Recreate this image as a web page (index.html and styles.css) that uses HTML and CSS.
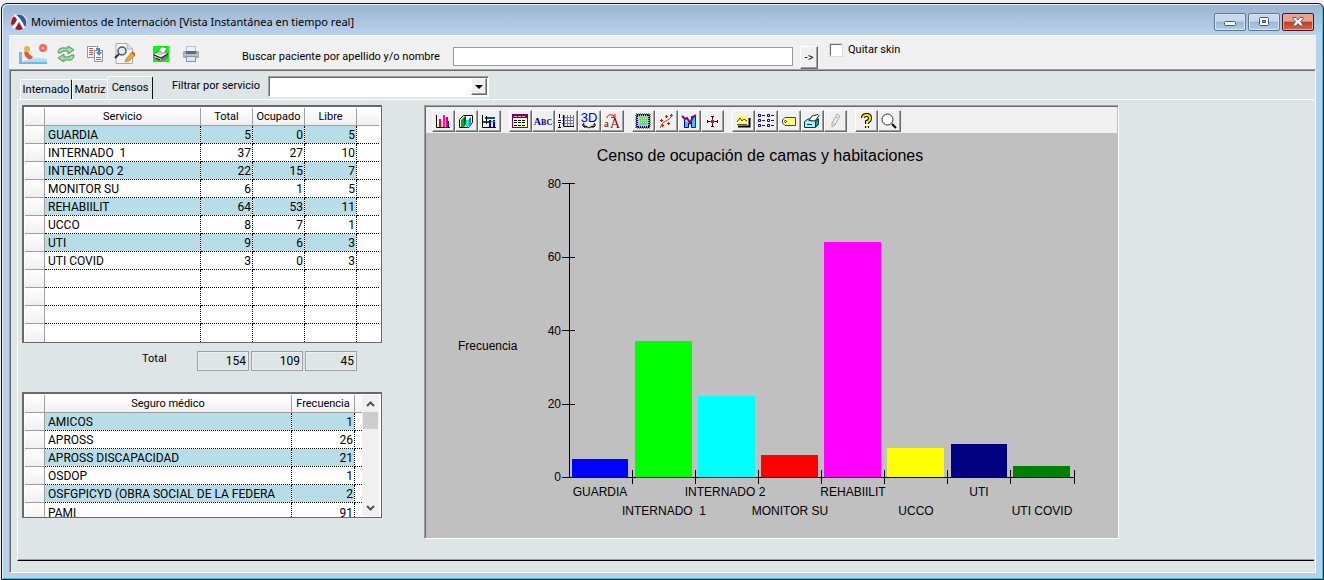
FILE: index.html
```html
<!DOCTYPE html>
<html lang="es">
<head>
<meta charset="utf-8">
<title>Movimientos de Internación</title>
<link rel="stylesheet" href="styles.css">
</head>
<body>
<div class="window">
  <header class="titlebar">
    <svg class="app-icon" width="16" height="16" viewBox="0 0 16 16">
      <circle cx="8" cy="8" r="8" fill="#f4f4f8"/>
      <path d="M5 1A8 8 0 0 1 14 13L11 9Q9 4 5 1Z" fill="#34599f"/>
      <path d="M3 2Q0 5 0 9L1 12Q5 9 6 6Q5 3 3 2Z" fill="#a11a22"/>
      <path d="M8 8L12 15Q8 17 4 15Z" fill="#a11a22"/>
      <path d="M3 1Q9 4 13 14M7 6Q5 11 2 14" fill="none" stroke="#fff" stroke-width="2"/>
    </svg>
    <h1 class="title">Movimientos de Internación [Vista Instantánea en tiempo real]</h1>
    <div class="win-buttons">
      <button class="win-btn" type="button" aria-label="Minimizar"><svg width="12" height="10" viewBox="0 0 12 10"><rect x=".5" y="4.500" width="11" height="4" rx="1" fill="#fff" stroke="#4f5666"/></svg></button>
      <button class="win-btn" type="button" aria-label="Restaurar"><svg width="12" height="10" viewBox="0 0 12 10"><rect x="1.500" y=".5" width="9" height="8" rx="1" fill="#fff" stroke="#4f5666"/><rect x="4.500" y="3.500" width="3" height="2" fill="#9db4cf" stroke="#4f5666"/></svg></button>
      <button class="win-btn close" type="button" aria-label="Cerrar"><svg width="12" height="10" viewBox="0 0 12 10"><path d="M1 .5H4L6 3L8 .5H11V1.500L8.500 4.500L11 8V9H8L6 6.500L4 9H1V8L3.500 4.500L1 1.500Z" fill="#fff" stroke="#56404a" stroke-width=".8"/></svg></button>
    </div>
  </header>
  <main class="client">
    <div class="toolbar">
      <div class="tool-icons">
        <button class="tool" type="button" aria-label="Internación"><svg width="28" height="21" viewBox="0 0 28 21">
          <path d="M0 9H3V20H0Z" fill="#7db9e2"/><path d="M3 19Q15 13 28 16V21H2Z" fill="#a9def5"/><path d="M0 19H28V21H0Z" fill="#70b9e6"/>
          <path d="M5 9Q9 7 10 11L14 14Q13 17 9 16L6 13Z" fill="#e8553f"/><circle cx="8" cy="6" r="3" fill="#edb44d"/>
          <circle cx="24" cy="5" r="4" fill="#ef6a5a"/><circle cx="24" cy="5" r="1.500" fill="#f7aaa0"/></svg></button>
        <button class="tool" type="button" aria-label="Actualizar"><svg width="18" height="16" viewBox="0 0 18 16">
          <path d="M1 7Q1 1 8 2H11V0L17 4L11 8V5H8Q4 5 4 7Z" fill="#a5dba2" stroke="#4c9560"/><path d="M17 9Q17 15 10 14H7V16L1 12L7 8V11H10Q14 11 14 9Z" fill="#a5dba2" stroke="#4c9560"/></svg></button>
        <button class="tool copy" type="button" aria-label="Copiar"><svg width="17" height="16" viewBox="0 0 17 16">
          <rect x=".5" y=".5" width="10" height="11" fill="#fff" stroke="#9298a8"/><path d="M2 2.500H6M2 4.500H6M2 6.500H6M2 8.500H6" stroke="#d05450"/>
          <rect x="7.500" y="4.500" width="8" height="11" fill="#fff" stroke="#8c93ab"/><path d="M9 11.500H14M9 13.500H14" stroke="#d05450"/><path d="M9 2H13V6H15L12 10L9 6H11V4H9Z" fill="#5682c6"/></svg></button>
        <button class="tool" type="button" aria-label="Ver y editar"><svg width="21" height="21" viewBox="0 0 21 21">
          <path d="M2 .5H13L18.500 6V20.500H2Z" fill="#f5f5f5" stroke="#aaa"/><path d="M13 .5V6H18.500" fill="#ddd" stroke="#b5b5b5"/>
          <circle cx="8" cy="8" r="4" fill="#dcebf8" stroke="#555" stroke-width="1.500"/><path d="M5 11L1 15" stroke="#333" stroke-width="2"/>
          <path d="M12 16L18 9L21 12L15 18L11 19Z" fill="#f5a931" stroke="#b67224" stroke-width=".7"/><path d="M18 9L21 12" stroke="#ce5a38" stroke-width="2"/></svg></button>
        <button class="tool census" type="button" aria-label="Imprimir censo"><svg width="16" height="16" viewBox="0 0 16 16">
          <rect width="16" height="16" fill="#0f0"/><path d="M1 8L6 5L8 1L14 2L12 6L15 8V11L8 15L1 12Z" fill="#c8c8c8" stroke="#555" stroke-width=".7"/><path d="M6 5L8 1L14 2L11 7Z" fill="#fff" stroke="#777" stroke-width=".5"/><path d="M8 12L15 8V11L8 15Z" fill="#777"/><path d="M1 9L8 12L15 8M3 12L7 14" fill="none" stroke="#111"/><path d="M2 8L8 10L12 8" fill="none" stroke="#fff"/></svg></button>
        <button class="tool print" type="button" aria-label="Imprimir"><svg width="16" height="16" viewBox="0 0 16 16">
          <rect x="3.500" y=".5" width="9" height="5" fill="#e8f2fa" stroke="#b1c3d3"/><rect y="5" width="16" height="7" rx="1" fill="#a5a8ad"/><path d="M3 5H13V8H3Z" fill="#626a74"/><path d="M1 9H15" stroke="#d4d6d9"/><rect x="3.500" y="10.500" width="9" height="5" fill="#d5e8f8" stroke="#7d98b2"/></svg></button>
      </div>
      <label class="search-label" for="search">Buscar paciente por apellido y/o nombre</label>
      <input class="search" id="search" type="text">
      <button class="go" type="button">-&gt;</button>
      <label class="skin"><input class="check" type="checkbox"><span>Quitar skin</span></label>
    </div>
    <div class="workspace">
      <div class="tab-strip">
        <div class="tabs" role="tablist">
          <button class="tab" role="tab" type="button">Internado</button>
          <button class="tab plain" role="tab" type="button">Matriz</button>
          <button class="tab active" role="tab" type="button" aria-selected="true">Censos</button>
        </div>
        <label class="filter-label" for="service">Filtrar por servicio</label>
        <div class="combo">
          <select class="combo-select" id="service"><option></option></select>
          <span class="combo-arrow"><svg width="8" height="4" viewBox="0 0 8 4"><path d="M0 0H8L4 4Z"/></svg></span>
        </div>
      </div>
      <section class="page">
        <div class="left">
          <div class="grid">
            <table class="data services">
              <colgroup><col class="c-head"><col class="c-service"><col class="c-num"><col class="c-num"><col class="c-num"><col></colgroup>
              <thead><tr><th></th><th>Servicio</th><th>Total</th><th>Ocupado</th><th>Libre</th><th></th></tr></thead>
              <tbody>
                <tr><th></th><td>GUARDIA</td><td>5</td><td>0</td><td>5</td><td></td></tr>
                <tr><th></th><td>INTERNADO  1</td><td>37</td><td>27</td><td>10</td><td></td></tr>
                <tr><th></th><td>INTERNADO 2</td><td>22</td><td>15</td><td>7</td><td></td></tr>
                <tr><th></th><td>MONITOR SU</td><td>6</td><td>1</td><td>5</td><td></td></tr>
                <tr><th></th><td>REHABIILIT</td><td>64</td><td>53</td><td>11</td><td></td></tr>
                <tr><th></th><td>UCCO</td><td>8</td><td>7</td><td>1</td><td></td></tr>
                <tr><th></th><td>UTI</td><td>9</td><td>6</td><td>3</td><td></td></tr>
                <tr><th></th><td>UTI COVID</td><td>3</td><td>0</td><td>3</td><td></td></tr>
                <tr class="empty"><th></th><td></td><td></td><td></td><td></td><td></td></tr>
                <tr class="empty"><th></th><td></td><td></td><td></td><td></td><td></td></tr>
                <tr class="empty"><th></th><td></td><td></td><td></td><td></td><td></td></tr>
                <tr class="empty"><th></th><td></td><td></td><td></td><td></td><td></td></tr>
              </tbody>
            </table>
          </div>
          <div class="totals">
            <label class="total-label" for="total">Total</label>
            <input class="total" id="total" type="text" value="154" readonly>
            <input class="total" type="text" value="109" readonly aria-label="Total ocupado">
            <input class="total" type="text" value="45" readonly aria-label="Total libre">
          </div>
          <div class="grid insurers-grid">
            <table class="data insurers">
              <colgroup><col class="c-head"><col class="c-insurer"><col class="c-freq"><col></colgroup>
              <thead><tr><th></th><th>Seguro médico</th><th>Frecuencia</th><th></th></tr></thead>
              <tbody>
                <tr><th></th><td>AMICOS</td><td>1</td><td></td></tr>
                <tr><th></th><td>APROSS</td><td>26</td><td></td></tr>
                <tr><th></th><td>APROSS DISCAPACIDAD</td><td>21</td><td></td></tr>
                <tr><th></th><td>OSDOP</td><td>1</td><td></td></tr>
                <tr><th></th><td>OSFGPICYD (OBRA SOCIAL DE LA FEDERA</td><td>2</td><td></td></tr>
                <tr><th></th><td>PAMI</td><td>91</td><td></td></tr>
              </tbody>
            </table>
            <div class="scrollbar">
              <button class="scroll-btn" type="button" aria-label="Subir"><svg width="9" height="6" viewBox="0 0 9 6"><path d="M1 5L4.500 1.500L8 5" fill="none" stroke="#555" stroke-width="2"/></svg></button>
              <div class="thumb"></div>
              <button class="scroll-btn" type="button" aria-label="Bajar"><svg width="9" height="6" viewBox="0 0 9 6"><path d="M1 1L4.500 4.500L8 1" fill="none" stroke="#555" stroke-width="2"/></svg></button>
            </div>
          </div>
        </div>
        <div class="chart">
          <div class="chart-tools">
            <div class="group">
              <button class="cbtn" type="button" aria-label="Barras"><svg viewBox="0 0 16 16"><path d="M1.500 2V14.500H15" fill="none" stroke="#000"/><path d="M4 6H6V14H4Z" fill="red"/><path d="M8 2H10V14H8Z" fill="#f0f"/><path d="M11 4H13V14H11Z" fill="red"/><path d="M13 8H14V14H13Z" fill="#00f"/></svg></button>
              <button class="cbtn" type="button" aria-label="Barras 3D"><svg viewBox="0 0 16 16"><path d="M1.500 6.500L5.500 2.500H14.500V9.500L10.500 14.500H1.500Z" fill="#fff" stroke="#000"/><path d="M3 7L6 4V14H3Z" fill="#00b000"/><path d="M6 4L8 3V11L6 14Z" fill="#006000"/><path d="M8 7H11V14H8Z" fill="#0ee"/><path d="M11 6L13 4V10L11 13Z" fill="#008080"/></svg></button>
              <button class="cbtn" type="button" aria-label="Combinado"><svg viewBox="0 0 16 16"><path d="M1.500 2V14.500H15" fill="none" stroke="#000"/><path d="M4 4H14V6H4ZM2 8H10V10H2Z" fill="#006040"/><path d="M5 3H6V11H5Z" fill="#000"/><path d="M8 7H10V14H8ZM12 7H14V14H12Z" fill="#00c"/><path d="M10 8.500H14" stroke="#0aa"/></svg></button>
            </div>
            <div class="group">
              <button class="cbtn" type="button" aria-label="Tabla"><svg viewBox="0 0 16 16"><rect x=".5" y="1.500" width="15" height="13" fill="#ffffc0" stroke="#800060"/><path d="M0 1H16V5H0Z" fill="#800060"/><path d="M2 3.500H14" stroke="#d8a8cf" stroke-dasharray="3 1"/><path d="M2 7.500H14M2 9.500H14M2 12.500H14" stroke="#000" stroke-dasharray="3 1"/></svg></button>
              <button class="cbtn" type="button" aria-label="Texto"><svg viewBox="0 0 16 16"><text class="abc" x="8" y="12"><tspan class="abc-a">A</tspan>BC</text></svg></button>
              <button class="cbtn" type="button" aria-label="Cuadrícula"><svg viewBox="0 0 16 16"><path d="M6.500 2V14M9.500 2V14M12.500 2V14M15.500 2V14M4 4.500H16M4 7.500H16M4 10.500H16" stroke="#7378a0"/><path d="M5.500 2V13.500H16" fill="none" stroke="#000"/><path d="M1.500 1V5M0 7.500H3M0 9.500H3M1.500 11V15M0 14.500H3" stroke="#000"/></svg></button>
              <button class="cbtn" type="button" aria-label="3D"><svg viewBox="0 0 16 16"><text class="three" x="8" y="9">3D</text><path d="M3 10Q0 12 3 14L5 13L8 15L11 13L13 14Q16 12 13 10M3 14V11M3 14H6M13 14V11M13 14H10" fill="none" stroke="#000"/></svg></button>
              <button class="cbtn" type="button" aria-label="Fuentes"><svg viewBox="0 0 16 16"><text class="small-a" x="0" y="14">a</text><text class="big-a" x="6" y="15">A</text><path d="M3 5Q3 1 9 2L10 4M11 1V4.500H7" fill="none" stroke="red"/></svg></button>
            </div>
            <div class="group">
              <button class="cbtn" type="button" aria-label="Trama"><svg viewBox="0 0 16 16"><rect x="1" y="1" width="14" height="14" fill="#c0c8c0"/><rect x="2" y="2" width="12" height="12" fill="none" stroke="#000070" stroke-width="2" stroke-dasharray="1 1"/><rect x="1" y="1" width="14" height="14" fill="none" stroke="#002010" stroke-dasharray="1 1"/><path d="M4 4H12V12H4Z" fill="#70d878"/><path d="M4 5.500H12M4 7.500H12M4 9.500H12" stroke="#c0ffc0" stroke-dasharray="1 1"/></svg></button>
              <button class="cbtn" type="button" aria-label="Dispersión"><svg viewBox="0 0 16 16"><path d="M2 15Q4 9 8 8T14 2" fill="none" stroke="#666"/><path d="M2 7.500H5M3.500 6V9M3 12.500H6M4.500 11V14M7 3.500H10M8.500 2V5M9 10.500H12M10.500 9V12M12 2.500H15M13.500 1V4" stroke="red"/></svg></button>
              <button class="cbtn" type="button" aria-label="Colores"><svg viewBox="0 0 16 16"><path d="M3.500 7V14.500H7.500V10M7.500 10.500H10.500V14.500H14.500V3.500H10.500V10" fill="#30c8ff" stroke="#0000a0"/><path d="M1 3L4 6L6 5L9 10L12 4L15 2" fill="none" stroke="#800080" stroke-width="2"/></svg></button>
              <button class="cbtn" type="button" aria-label="Ejes"><svg viewBox="0 0 16 16"><path d="M8.500 3V14M7 3.500H10M7 13.500H10M3 8.500H14M3.500 7V10M13.500 7V10" stroke="#000"/><path d="M7 7H10V10H7ZM6 8H11V9H6ZM8 6H9V11H8Z" fill="red"/></svg></button>
            </div>
            <div class="group">
              <button class="cbtn" type="button" aria-label="Área"><svg viewBox="0 0 16 16"><path d="M3 13.500H14.500V5" fill="none" stroke="#000" stroke-width="2"/><path d="M2 3H12V11H2Z" fill="#ffff70"/><path d="M2 9L5 5L7 8L9 6L12 8" fill="none" stroke="#444"/><path d="M2 11.500H12" stroke="#660"/></svg></button>
              <button class="cbtn" type="button" aria-label="Leyenda"><svg viewBox="0 0 16 16"><path d="M.5 1.500H2.500V3.500H.5ZM.5 6.500H2.500V8.500H.5ZM.5 11.500H2.500V13.500H.5ZM9.500 1.500H11.500V3.500H9.500ZM9.500 6.500H11.500V8.500H9.500ZM9.500 11.500H11.500V13.500H9.500Z" fill="#fff" stroke="#0000a0"/><path d="M4 2.500H7M4 7.500H7M4 12.500H7M13 2.500H16M13 7.500H16M13 12.500H16" stroke="#222"/></svg></button>
              <button class="cbtn" type="button" aria-label="Etiqueta"><svg viewBox="0 0 16 16"><path d="M1.500 7L4 4.500H14.500V12.500H4L1.500 10Z" fill="#ffff80" stroke="#444"/><circle cx="4.500" cy="8.500" r="1" fill="#fff" stroke="#444"/></svg></button>
              <button class="cbtn" type="button" aria-label="Imprimir gráfico"><svg viewBox="0 0 16 16"><path d="M.5 8.500L4 6H14.500V11L11.500 14.500H.5Z" fill="#9ff0f0" stroke="#003840"/><path d="M5 7.500L8 3L14 1.500L15 2.500L11 8Z" fill="#fff" stroke="#222"/><path d="M11.500 8.500V14L14.500 11V6Z" fill="#10a0a8" stroke="#003840"/><path d="M3 11.500H8" stroke="#003840"/></svg></button>
              <button class="cbtn" type="button" aria-label="Lápiz" disabled><svg viewBox="0 0 16 16"><path d="M5 14V10L10 1L13 3L8 12ZM6 10L8 12M9 4L11 5" fill="#eee" stroke="#aaa"/></svg></button>
            </div>
            <div class="group">
              <button class="cbtn" type="button" aria-label="Ayuda"><svg viewBox="0 0 16 16"><path d="M5 5Q5 2 8.500 2T12 5T9 9V11M9 13V15" fill="none" stroke="#000" stroke-width="4"/><path d="M5 5Q5 2 8.500 2T12 5T9 9V11M9 13V15" fill="none" stroke="#ffe600" stroke-width="2"/></svg></button>
              <button class="cbtn" type="button" aria-label="Zoom"><svg viewBox="0 0 16 16"><circle cx="6.500" cy="6.500" r="5.500" fill="#fafafa" stroke="#333"/><path d="M11 11L15 15" stroke="#000" stroke-width="2"/></svg></button>
            </div>
          </div>
          <svg class="plot" viewBox="0 0 691 404" role="img" aria-label="Censo de ocupación de camas y habitaciones">
            <text class="plot-title" x="334" y="28">Censo de ocupación de camas y habitaciones</text>
            <text x="32" y="217">Frecuencia</text>
            <g class="y-labels"><text x="135" y="55">80</text><text x="135" y="128">60</text><text x="135" y="202">40</text><text x="135" y="275">20</text><text x="135" y="348">0</text></g>
            <g class="bars">
              <rect x="146" y="326" width="56" height="18" fill="#0000ff"/>
              <rect x="209" y="208" width="57" height="136" fill="#00ff00"/>
              <rect x="272" y="263" width="57" height="81" fill="#00ffff"/>
              <rect x="335" y="322" width="57" height="22" fill="#ff0000"/>
              <rect x="398" y="109" width="57" height="235" fill="#ff00ff"/>
              <rect x="461" y="315" width="57" height="29" fill="#ffff00"/>
              <rect x="525" y="311" width="56" height="33" fill="#000080"/>
              <rect x="587" y="333" width="57" height="11" fill="#008000"/>
            </g>
            <path class="axis" d="M143.500 50V344.500H648.500M136 50.500H149M136 124.500H149M136 197.500H149M136 271.500H149M136 344.500H149M206.500 337V351M269.500 337V351M332.500 337V351M395.500 337V351M458.500 337V351M521.500 337V351M584.500 337V351M648.500 337V351"/>
            <g class="x-labels">
              <text x="174" y="363">GUARDIA</text><text x="238" y="382">INTERNADO  1</text><text x="299" y="363">INTERNADO 2</text><text x="364" y="382">MONITOR SU</text><text x="427" y="363">REHABIILIT</text><text x="490" y="382">UCCO</text><text x="553" y="363">UTI</text><text x="616" y="382">UTI COVID</text>
            </g>
          </svg>
        </div>
      </section>
    </div>
  </main>
</div>
</body>
</html>
```

FILE: styles.css
```css
* { box-sizing: border-box; }

body {
  display: flex;
  flex-direction: column;
  min-height: 100vh;
  margin: 0;
  padding: 3px 0 0 1px;
  background: #f0f0f0;
  color: #000;
  font: 11px/16px Roboto, "Liberation Sans", sans-serif;
}

button, input, select { margin: 0; padding: 0; border-radius: 0; font: inherit; color: inherit; }

.window {
  display: flex;
  flex: 1;
  flex-direction: column;
  padding: 0 7px 6px;
  border: 1px solid #10161c;
  border-radius: 6px 6px 0 0;
  background: linear-gradient(#99b4d1, #b9d1ea 30px);
  box-shadow: inset 1px 1px #e8f2fb, inset -1px -1px #3cc0d8;
}

.titlebar { display: flex; align-items: center; height: 31px; padding: 4px 2px 0; gap: 4px; }
.app-icon { flex: none; }
.title { flex: 1; margin: 0; font: 11px/16px "Noto Sans", sans-serif; }
.win-buttons { display: flex; gap: 2px; }
.win-btn {
  display: grid;
  place-items: center;
  width: 32px;
  height: 18px;
  border: 1px solid #5f7691;
  border-radius: 2px;
  background: linear-gradient(#c6d9ee 45%, #9ab5d3 50%, #b4cde8);
  box-shadow: inset 0 0 0 1px #d7e6f5;
}
.close {
  border-color: #431422;
  background: linear-gradient(#e5a291 45%, #bf3e24 50%, #d36b4c);
  box-shadow: inset 0 0 0 1px #eaa799;
}

.client { display: flex; flex: 1; flex-direction: column; border-top: 1px solid #fff; background: #f0f0f0; }
.toolbar { display: flex; align-items: center; height: 33px; padding-left: 10px; }
.tool-icons { display: flex; align-items: center; gap: 10px; width: 223px; padding-top: 2px; }
.tool { display: grid; padding: 0; border: 0; background: none; }
.copy { margin-left: 2px; }
.census { margin-left: 8px; }
.print { margin-left: 4px; }
.search-label { width: 211px; padding-top: 8px; white-space: nowrap; }
.search { width: 340px; height: 19px; margin-top: 8px; border: 1px solid #999; background: #fff; }
.go {
  align-self: flex-end;
  width: 18px;
  height: 23px;
  margin-left: 7px;
  border: 1px solid;
  border-color: #fff #696969 #696969 #fff;
  background: #f0f0f0;
  box-shadow: inset -1px -1px #a0a0a0;
  line-height: 20px;
}
.skin { display: flex; align-items: center; gap: 6px; margin: 0 0 6px 12px; }
.check {
  width: 12px;
  height: 12px;
  appearance: none;
  border: 1px solid;
  border-color: #696969 #fff #fff #696969;
  outline: 1px solid #dcdcdc;
  background: #fff;
}
.check:checked { background: #333; }

.workspace {
  display: flex;
  flex: 1;
  flex-direction: column;
  padding: 6px 1px 11px 7px;
  border: 1px solid;
  border-color: #a0a0a0 #fff #fff #a0a0a0;
  background: #dde5e6;
  box-shadow: inset 1px 1px #696969;
}
.tab-strip { display: flex; height: 23px; }
.tabs { display: flex; align-items: flex-end; width: 155px; padding-left: 3px; }
.tab {
  height: 20px;
  width: 52px;
  border: 1px solid #fff;
  border-right: 1px solid #111;
  border-bottom: 0;
  border-radius: 2px 2px 0 0;
  background: #dde5e6;
}
.plain { width: 35px; border-right: 0; }
.active { width: 46px; height: 23px; }
.filter-label { width: 96px; padding-top: 2px; }
.combo { position: relative; width: 221px; height: 21px; }
.combo-select {
  display: block;
  width: 100%;
  height: 100%;
  appearance: none;
  border: 1px solid;
  border-color: #a0a0a0 #fff #fff #a0a0a0;
  background: #fff;
  box-shadow: inset 1px 1px #696969;
}
.combo-arrow {
  position: absolute;
  top: 2px;
  right: 2px;
  bottom: 2px;
  display: grid;
  place-items: center;
  width: 16px;
  border: 1px solid;
  border-color: #fff #696969 #696969 #fff;
  background: #f0f0f0;
  box-shadow: inset -1px -1px #a0a0a0;
  pointer-events: none;
}

.page {
  display: flex;
  flex: 1;
  align-items: flex-start;
  gap: 42px;
  padding: 5px 12px 20px 4px;
  border: 1px solid #fff;
  border-right: 0;
  border-bottom: 1px solid #000;
  box-shadow: inset 0 -1px #a0a0a0;
}
.left { flex: none; width: 360px; }
.grid {
  display: flex;
  height: 238px;
  overflow: hidden;
  border: 1px solid #696969;
  background: #fff;
  box-shadow: inset 1px 1px #696969;
  padding: 2px 2px 1px;
}
.data { flex: 1; width: 0; height: min-content; table-layout: fixed; border-spacing: 0; white-space: pre; }
.data th, .data td { height: 18px; padding: 1px 1px 0 3px; overflow: hidden; font-weight: 400; line-height: 16px; }
.data th { padding: 1px 0 0; border: solid #a0a0a0; border-width: 0 1px 1px 0; background: linear-gradient(#fff, #f0f0f0); }
.data thead th:last-child { border-right: 0; }
.data td { border: dotted #000; border-width: 0 1px 1px 0; font-size: 12px; text-align: right; background-clip: padding-box; }
.data td:nth-child(2) { text-align: left; }
.data td:last-child { border-right: 0; }
.data tbody tr:last-child > * { border-bottom: 0; }
.data tbody tr:nth-child(odd):not(.empty) td:not(:last-child) { background-color: #b7dde8; }
.c-head { width: 20px; }
.c-service { width: 156px; }
.c-num { width: 52px; }
.c-insurer { width: 247px; }
.c-freq { width: 63px; }

.totals { display: flex; gap: 2px; margin: 8px 0 21px 120px; }
.total-label { width: 53px; line-height: 16px; }
.total {
  width: 52px;
  height: 20px;
  padding-right: 2px;
  border: 1px solid #a0a0a0;
  outline: 1px solid #ebefef;
  outline-offset: -2px;
  background: #dde5e6;
  font-size: 12px;
  text-align: right;
}
.insurers-grid { height: 126px; }
.scrollbar { display: flex; flex-direction: column; width: 17px; background: #f0f0f0; }
.scroll-btn { display: grid; place-items: center; height: 17px; border: 0; background: none; }
.thumb { height: 17px; margin: 0 1px auto; background: #cdcdcd; }

.chart {
  flex: 0 1 695px;
  border: 1px solid;
  border-color: #a0a0a0 #fff #fff #a0a0a0;
  padding: 1px;
  background: #c0c0c0;
  box-shadow: inset 1px 1px #696969;
}
.chart-tools { display: flex; gap: 8px; padding: 3px 6px 0; height: 26px; background: #f0f0f0; }
.group { display: flex; }
.cbtn {
  display: grid;
  place-items: center;
  width: 23px;
  height: 22px;
  padding-right: 1px;
  border: 1px solid;
  border-color: #fff #696969 #696969 #fff;
  background: #f0f0f0;
  box-shadow: inset -1px -1px #a0a0a0;
}
.cbtn svg { width: 16px; height: 16px; overflow: visible; }
.abc { font: 700 8px "Liberation Serif", serif; fill: #000080; text-anchor: middle; }
.abc-a { font-size: 10px; }
.three { font: 13px "Liberation Sans", sans-serif; fill: #0000c0; text-anchor: middle; }
.small-a { font: 11px "Liberation Serif", serif; fill: #600; }
.big-a { font: 14px "Liberation Serif", serif; fill: #900; }

.plot { display: block; width: 100%; font: 12px "Liberation Sans", Arial, sans-serif; }
.plot text { white-space: pre; }
.plot-title { font-size: 16px; text-anchor: middle; }
.y-labels { text-anchor: end; }
.x-labels { text-anchor: middle; }
.bars { shape-rendering: crispEdges; }
.axis { fill: none; stroke: #000; shape-rendering: crispEdges; }
```
